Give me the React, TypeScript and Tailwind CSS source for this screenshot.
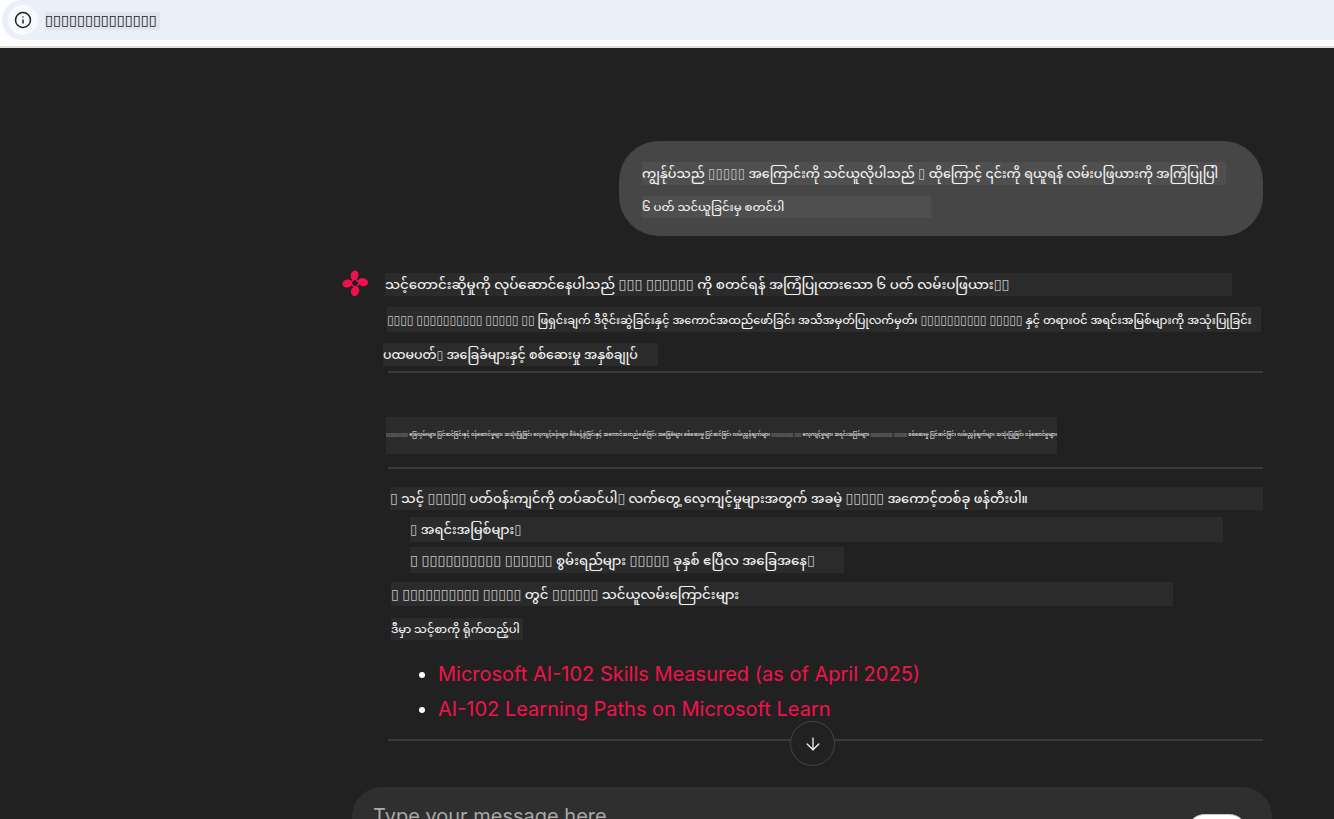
import { ArrowDown, Info } from "lucide-react";
import type { ReactNode } from "react";

const MY = "font-['Noto_Sans_Myanmar','Padauk','Inter','DejaVu_Sans',sans-serif]";

function T({ children, tofu = "text-[14.5px]" }: { children: string; tofu?: string }): ReactNode {
  return (
    <span>
      {children.split(/(▯+)/).map((part, i) =>
        part.startsWith("▯") ? (
          <span key={i} className={`${tofu} text-[#c4c4c4]`}>{part}</span>
        ) : (
          <span key={i}>{part}</span>
        ),
      )}
    </span>
  );
}

function Logo() {
  return (
    <svg viewBox="0 0 28 28" className="h-[27px] w-[27px] shrink-0">
      <g fill="#f0104f">
        <ellipse cx="13" cy="5.6" rx="4" ry="5.2" transform="rotate(14 13 5.6)" />
        <ellipse cx="21.6" cy="12.6" rx="5.4" ry="4.2" transform="rotate(14 21.6 12.6)" />
        <ellipse cx="13.6" cy="21.8" rx="4.2" ry="5.2" transform="rotate(22 13.6 21.8)" />
        <ellipse cx="5.6" cy="14" rx="5.2" ry="4.2" transform="rotate(-12 5.6 14)" />
      </g>
      <polygon points="13,8.6 18.2,13.4 13.8,18.6 8.6,13.8" fill="none" stroke="#f0104f" strokeWidth="1.4" />
    </svg>
  );
}

const bar = "flex items-center whitespace-nowrap bg-[#2b2b2b] pt-[3px]";

export default function App() {
  return (
    <div className={`relative h-[819px] w-[1334px] overflow-hidden bg-[#212121] text-[#f1f1f1] ${MY}`}>
      <header className="h-[48px] border-b-2 border-[#e0e0e0] bg-white">
        <div className="ml-[2px] flex h-[40px] items-center rounded-l-[20px] bg-[#eaeff9]">
          <div className="ml-[6px] flex h-[30px] w-[30px] items-center justify-center rounded-full bg-[#f8faff]">
            <Info size={18} strokeWidth={2} className="text-[#1f1f1f]" />
          </div>
          <span className="ml-[7px] mt-[1px] flex h-[18px] w-[115px] items-center whitespace-nowrap bg-[#dfe5ee] pt-[2px] text-[14.5px] text-[#222]">▯▯▯▯▯▯▯▯▯▯▯▯▯▯</span>
        </div>
      </header>

      <main className="pl-[342px]">
        <section className="ml-[277px] mt-[93px] h-[95px] w-[644px] rounded-[40px] bg-[#464646] pl-[23px] pt-[21px] font-medium">
          <p className="flex h-[23px] w-[584px] items-center whitespace-nowrap bg-[#4f4f4f] pt-[3px] text-[12.7px]"><T tofu="text-[13.5px]">ကျွန်ုပ်သည် ▯▯▯▯▯ အကြောင်းကို သင်ယူလိုပါသည် ▯ ထိုကြောင့် ၎င်းကို ရယူရန် လမ်းပဖြယားကို အကြံပြုပြါ</T></p>
          <p className="mt-[11px] flex h-[22px] w-[289px] items-center whitespace-nowrap bg-[#4f4f4f] pt-[3px] text-[11.6px]"><T>၆ ပတ် သင်ယူခြင်းမှ စတင်ပါ</T></p>
        </section>

        <section className="mt-[34px] flex font-medium">
          <Logo />
          <div className="ml-[14px] mt-[3px] w-[880px]">
            <p className={`${bar} ml-[2px] h-[23px] w-[847px] text-[13.4px]`}><T tofu="text-[14.5px]">သင့်တောင်းဆိုမှုကို လုပ်ဆောင်နေပါသည် ▯▯▯ ▯▯▯▯▯▯ ကို စတင်ရန် အကြံပြုထားသော ၆ ပတ် လမ်းပဖြယား▯▯</T></p>
            <p className={`${bar} ml-[4px] mt-[11px] h-[25px] w-[874px] text-[11.3px]`}><T tofu="text-[12px]">▯▯▯▯ ▯▯▯▯▯▯▯▯▯▯ ▯▯▯▯▯ ▯▯ ဖြရှင်းချက် ဒီဇိုင်းဆွဲခြင်းနှင့် အကောင်အထည်ဖော်ခြင်း အသိအမှတ်ပြုလက်မှတ်၊ ▯▯▯▯▯▯▯▯▯▯ ▯▯▯▯▯ နှင့် တရားဝင် အရင်းအမြစ်များကို အသုံးပြုခြင်း</T></p>
            <p className={`${bar} mt-[11px] h-[23px] w-[275px] text-[12.5px]`}><T tofu="text-[12px]">ပထမပတ်▯ အခြေခံများနှင့် စစ်ဆေးမှု အနှစ်ချုပ်</T></p>
            <hr className="ml-[5px] mt-[5px] w-[875px] border-t-2 border-[#3a3a3a]" />
            <p className="ml-[3px] mt-[44px] flex h-[37px] w-[671px] items-center whitespace-nowrap bg-[#2b2b2b] text-[4.9px]"><T tofu="text-[4px]">▯▯▯▯▯▯▯▯▯▯ ခြေလှမ်းများ ပြင်ဆင်ခြင်းနှင့် ဝန်ဆောင်မှုများ အသုံးပြုခြင်း လေ့ကျင့်ခန်းများ စီမံခန့်ခွဲခြင်းနှင့် အကောင်အထည်ဖော်ခြင်း အခြေခံများ စစ်ဆေးမှု ပြင်ဆင်ခြင်း လမ်းညွှန်ချက်များ ▯▯▯▯▯▯▯▯▯▯ ▯▯▯ လေ့ကျင့်မှုများ အရင်းအမြစ်များ ▯▯▯▯▯▯▯▯▯▯ ▯▯▯▯▯▯ စစ်ဆေးမှု ပြင်ဆင်ခြင်း လမ်းညွှန်ချက်များ အသုံးပြုခြင်း ဝန်ဆောင်မှုများ</T></p>
            <hr className="ml-[5px] mt-[13px] w-[875px] border-t-2 border-[#3a3a3a]" />
            <p className={`${bar} ml-[7px] mt-[18px] h-[23px] w-[873px] text-[13px]`}><T tofu="text-[14px]">▯ သင့် ▯▯▯▯▯ ပတ်ဝန်းကျင်ကို တပ်ဆင်ပါ▯ လက်တွေ့ လေ့ကျင့်မှုများအတွက် အခမဲ့ ▯▯▯▯▯ အကောင့်တစ်ခု ဖန်တီးပါ။</T></p>
            <p className={`${bar} ml-[27px] mt-[7px] h-[25px] w-[813px] text-[13px]`}><T tofu="text-[13.5px]">▯ အရင်းအမြစ်များ▯</T></p>
            <p className={`${bar} ml-[27px] mt-[5px] h-[26px] w-[434px] text-[13.3px]`}><T tofu="text-[14.5px]">▯ ▯▯▯▯▯▯▯▯▯▯ ▯▯▯▯▯▯ စွမ်းရည်များ ▯▯▯▯▯ ခုနှစ် ဧပြီလ အခြေအနေ▯</T></p>
            <p className={`${bar} ml-[8px] mt-[9px] h-[24px] w-[782px] text-[13.4px]`}><T tofu="text-[14px]">▯ ▯▯▯▯▯▯▯▯▯▯ ▯▯▯▯▯ တွင် ▯▯▯▯▯▯ သင်ယူလမ်းကြောင်းများ</T></p>
            <p className={`${bar} ml-[8px] mt-[12px] h-[22px] w-[132px] text-[11.4px]`}><T>ဒီမှာ သင့်စာကို ရိုက်ထည့်ပါ</T></p>
            <ul className="ml-[38px] mt-[17px] list-disc pl-[17px] font-['Inter',sans-serif] text-[20px] font-normal leading-[35px] text-[#f0134d]">
              <li className="marker:text-white">Microsoft AI-102 Skills Measured (as of April 2025)</li>
              <li className="marker:text-white">AI-102 Learning Paths on Microsoft Learn</li>
            </ul>
            <hr className="ml-[5px] mt-[12px] w-[875px] border-t-2 border-[#3a3a3a]" />
          </div>
        </section>

        <section className="ml-[10px] mt-[46px] flex h-[80px] w-[920px] rounded-t-[30px] bg-[#2f2f2f] pl-[21px] pt-[17px]">
          <span className="font-['Inter',sans-serif] text-[20px] leading-[24px] text-[#a8a8a8]">Type your message here</span>
          <div className="ml-[580px] mt-[10px] flex h-[40px] w-[60px] justify-end rounded-[18px] border-t border-[#bfc9c9] bg-white pr-[9px] pt-[4px]">
            <div className="h-[4px] w-[8px] rounded-t-[2px] bg-[#7ccfc4]" />
          </div>
        </section>
      </main>

      <button className="absolute left-[790px] top-[721px] flex h-[45px] w-[45px] items-center justify-center rounded-full border border-[#444] bg-[#212121] text-[#f1f1f1]">
        <ArrowDown size={20} strokeWidth={1.6} />
      </button>
    </div>
  );
}
